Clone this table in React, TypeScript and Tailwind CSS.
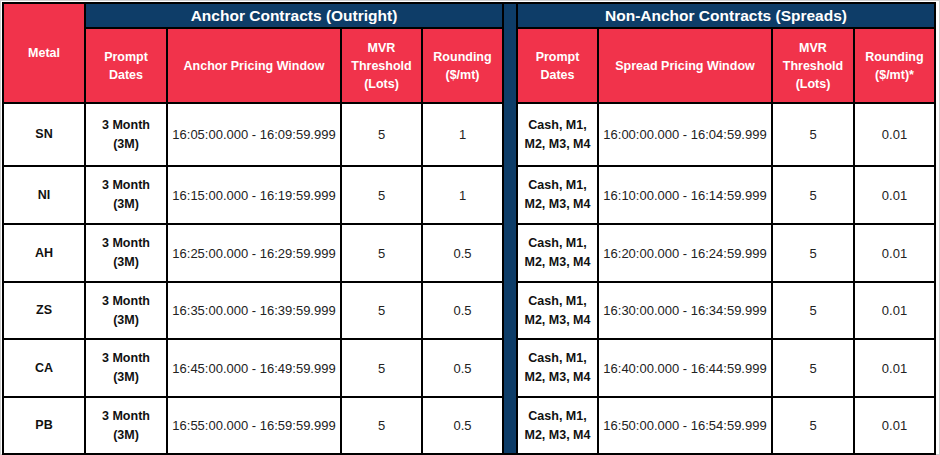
import React from "react";

const rows = [
  { metal: "SN", anchor: "16:05:00.000 - 16:09:59.999", anchorRound: "1", spread: "16:00:00.000 - 16:04:59.999" },
  { metal: "NI", anchor: "16:15:00.000 - 16:19:59.999", anchorRound: "1", spread: "16:10:00.000 - 16:14:59.999" },
  { metal: "AH", anchor: "16:25:00.000 - 16:29:59.999", anchorRound: "0.5", spread: "16:20:00.000 - 16:24:59.999" },
  { metal: "ZS", anchor: "16:35:00.000 - 16:39:59.999", anchorRound: "0.5", spread: "16:30:00.000 - 16:34:59.999" },
  { metal: "CA", anchor: "16:45:00.000 - 16:49:59.999", anchorRound: "0.5", spread: "16:40:00.000 - 16:44:59.999" },
  { metal: "PB", anchor: "16:55:00.000 - 16:59:59.999", anchorRound: "0.5", spread: "16:50:00.000 - 16:54:59.999" },
];

const head = "bg-[#f1334b] text-white font-bold text-[12.5px] leading-[18px] flex items-center justify-center text-center";
const title = "bg-[#0e3d68] text-white font-bold text-[15.5px] flex items-center justify-center";
const cell = "bg-white text-[#222] text-[13px] leading-[19px] flex items-center justify-center text-center";
const bold = "bg-white text-[#111] font-bold text-[12.5px] leading-[19px] flex items-center justify-center text-center";

export default function App() {
  return (
    <div className="w-[940px] h-[455px] bg-white border border-[#cfcfcf]" style={{ fontFamily: '"Liberation Sans", Arial, sans-serif' }}>
      <div className="m-[1px] w-fit grid bg-black gap-[2px] p-[2px] grid-cols-[80px_80px_172px_79px_79px_12px_79px_172px_80px_79px] grid-rows-[23px_73px_61px_56px_56px_55px_56px_55px]">
        {/* header */}
        <div className={`${head} row-span-2`}>Metal</div>
        <div className={`${title} col-span-4`}>Anchor Contracts (Outright)</div>
        <div className="bg-[#0e3d68] row-span-8" />
        <div className={`${title} col-span-4`}>Non-Anchor Contracts (Spreads)</div>

        <div className={head}>Prompt<br />Dates</div>
        <div className={head}>Anchor Pricing Window</div>
        <div className={head}>MVR<br />Threshold<br />(Lots)</div>
        <div className={head}>Rounding<br />($/mt)</div>
        <div className={head}>Prompt<br />Dates</div>
        <div className={head}>Spread Pricing Window</div>
        <div className={head}>MVR<br />Threshold<br />(Lots)</div>
        <div className={head}>Rounding<br />($/mt)*</div>

        {/* body */}
        {rows.map(r => (
          <React.Fragment key={r.metal}>
            <div className={bold}>{r.metal}</div>
            <div className={bold}>3 Month<br />(3M)</div>
            <div className={cell}>{r.anchor}</div>
            <div className={cell}>5</div>
            <div className={cell}>{r.anchorRound}</div>
            <div className={bold}>Cash, M1,<br />M2, M3, M4</div>
            <div className={cell}>{r.spread}</div>
            <div className={cell}>5</div>
            <div className={cell}>0.01</div>
          </React.Fragment>
        ))}
      </div>
    </div>
  );
}
